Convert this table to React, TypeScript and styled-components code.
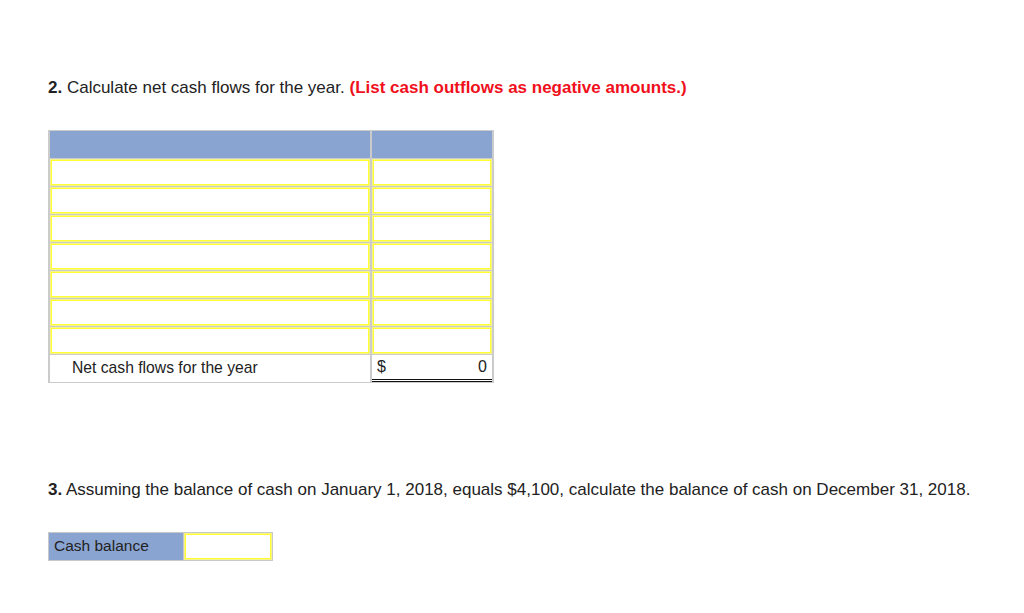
import React from "react";
import styled, { createGlobalStyle } from "styled-components";

const GlobalStyle = createGlobalStyle`
  html, body {
    margin: 0;
    padding: 0;
    background: #ffffff;
  }
  body {
    font-family: "Liberation Sans", Arial, Helvetica, sans-serif;
    color: #222222;
  }
`;

const Page = styled.div`
  width: 1024px;
  height: 613px;
  box-sizing: border-box;
  padding: 78px 0 0 48px;
  background: #ffffff;
`;

const Question = styled.div<{ $top?: number }>`
  font-size: 17px;
  line-height: 20px;
  color: #222222;
  margin-top: ${(p) => p.$top ?? 0}px;
  white-space: nowrap;
`;

const Num = styled.b`
  font-weight: bold;
`;

const Note = styled.b`
  font-weight: bold;
  color: #f0101c;
`;

const Table = styled.div`
  margin-top: 32px;
  width: 446px;
  box-sizing: border-box;
  display: grid;
  grid-template-columns: 320px 120px;
  grid-auto-rows: 27px;
  row-gap: 1px;
  column-gap: 2px;
  background: #cbcbcb;
  border: 1px solid #cbcbcb;
  border-left-width: 2px;
  border-right-width: 2px;
`;

const HeadCell = styled.div`
  background: #8aa4d1;
`;

const InputCell = styled.div`
  background: #ffffff;
  box-sizing: border-box;
  border: 1px solid #f4f48a;
  box-shadow: inset 0 0 0 1px #ffff33;
`;

const LabelCell = styled.div`
  background: #ffffff;
  font-size: 15.7px;
  line-height: 25px;
  padding-left: 22px;
  color: #222222;
`;

const AmountCell = styled.div`
  background: #ffffff;
  box-sizing: border-box;
  display: flex;
  justify-content: space-between;
  align-items: center;
  font-size: 16px;
  padding: 0 5px 0 5px;
  border-bottom: 3px double #111111;
  color: #222222;
`;

const CashRow = styled.div`
  margin-top: 32px;
  display: flex;
  width: 225px;
  height: 29px;
  box-sizing: border-box;
  border: 1px solid #c8c8c8;
  background: #c8c8c8;
  gap: 1px;
`;

const CashLabel = styled.div`
  width: 134px;
  background: #8aa4d1;
  font-size: 15.5px;
  line-height: 25px;
  padding-left: 5px;
  box-sizing: border-box;
  color: #222222;
`;

const CashInput = styled.div`
  flex: 1;
  background: #ffffff;
  box-sizing: border-box;
  border: 1px solid #f4f48a;
  box-shadow: inset 0 0 0 1px #ffff33;
`;

export default function App() {
  const rows = Array.from({ length: 7 });
  return (
    <>
      <GlobalStyle />
      <Page>
        <Question>
          <Num>2.</Num> Calculate net cash flows for the year.{" "}
          <Note>(List cash outflows as negative amounts.)</Note>
        </Question>
        <Table>
          <HeadCell />
          <HeadCell />
          {rows.map((_, i) => (
            <React.Fragment key={i}>
              <InputCell />
              <InputCell />
            </React.Fragment>
          ))}
          <LabelCell>Net cash flows for the year</LabelCell>
          <AmountCell>
            <span>$</span>
            <span>0</span>
          </AmountCell>
        </Table>
        <Question $top={97}>
          <Num>3.</Num> Assuming the balance of cash on January 1, 2018, equals $4,100,
          calculate the balance of cash on December 31, 2018.
        </Question>
        <CashRow>
          <CashLabel>Cash balance</CashLabel>
          <CashInput />
        </CashRow>
      </Page>
    </>
  );
}
